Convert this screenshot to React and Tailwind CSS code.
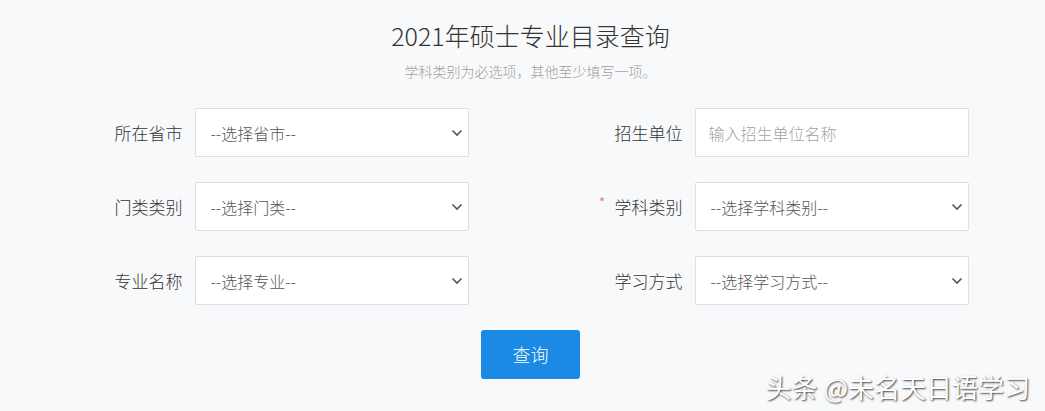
import React from "react";

const fields = [
  { label: "所在省市", type: "select", value: "--选择省市--" },
  { label: "招生单位", type: "input", value: "输入招生单位名称" },
  { label: "门类类别", type: "select", value: "--选择门类--" },
  { label: "学科类别", type: "select", value: "--选择学科类别--", required: true },
  { label: "专业名称", type: "select", value: "--选择专业--" },
  { label: "学习方式", type: "select", value: "--选择学习方式--" },
];

function Chevron() {
  return (
    <svg
      width="12"
      height="8"
      viewBox="0 0 12 8"
      className="absolute right-[6px] top-1/2 -translate-y-1/2 pointer-events-none"
    >
      <polyline points="1.5,1.5 6,6 10.5,1.5" fill="none" stroke="#555" strokeWidth="1.6" />
    </svg>
  );
}

function Field({ field }) {
  return (
    <div className="flex items-center gap-[12px]">
      <label className="w-[90px] flex items-center justify-end text-[17px] text-[#333] font-light">
        {field.required && (
          <span className="text-[#e0707e] text-[15px] mr-[9px] -mt-[6px]">*</span>
        )}
        {field.label}
      </label>
      {field.type === "select" ? (
        <div className="relative w-[274px] h-[49px]">
          <select
            defaultValue=""
            className="appearance-none w-full h-full bg-white border border-[#dcdfe3] rounded-[2px] pl-[15px] pr-[30px] text-[16px] text-[#555] font-light outline-none"
          >
            <option value="">{field.value}</option>
          </select>
          <Chevron />
        </div>
      ) : (
        <input
          placeholder={field.value}
          className="w-[274px] h-[49px] bg-white border border-[#dcdfe3] rounded-[2px] px-[13px] text-[16px] text-[#555] font-light placeholder:text-[#a3a3a3] outline-none"
        />
      )}
    </div>
  );
}

export default function App() {
  return (
    <div className="relative min-h-[411px] bg-[#f8f9fb] pl-[16px] font-['Noto_Sans_CJK_SC','Noto_Sans',sans-serif]">
      <div className="flex flex-col items-center pt-[19px]">
        <h1 className="text-[25px] leading-[32px] text-[#333] font-light">2021年硕士专业目录查询</h1>
        <p className="mt-[10px] text-[14px] leading-[20px] text-[#a0a0a0] font-light">
          学科类别为必选项，其他至少填写一项。
        </p>

        <div className="mt-[27px] grid grid-cols-[376px_376px] gap-x-[124px] gap-y-[25px]">
          {fields.map((f) => (
            <Field key={f.label} field={f} />
          ))}
        </div>

        <button className="mt-[25px] w-[99px] h-[49px] rounded-[3px] bg-[#1a8ae5] text-white text-[18px] font-light">
          查询
        </button>
      </div>

      <div className="absolute right-[15px] bottom-[6px] text-[26px] leading-[36px] text-white [text-shadow:1px_1px_2px_rgba(0,0,0,0.75)]">
        头条 @未名天日语学习
      </div>
    </div>
  );
}
